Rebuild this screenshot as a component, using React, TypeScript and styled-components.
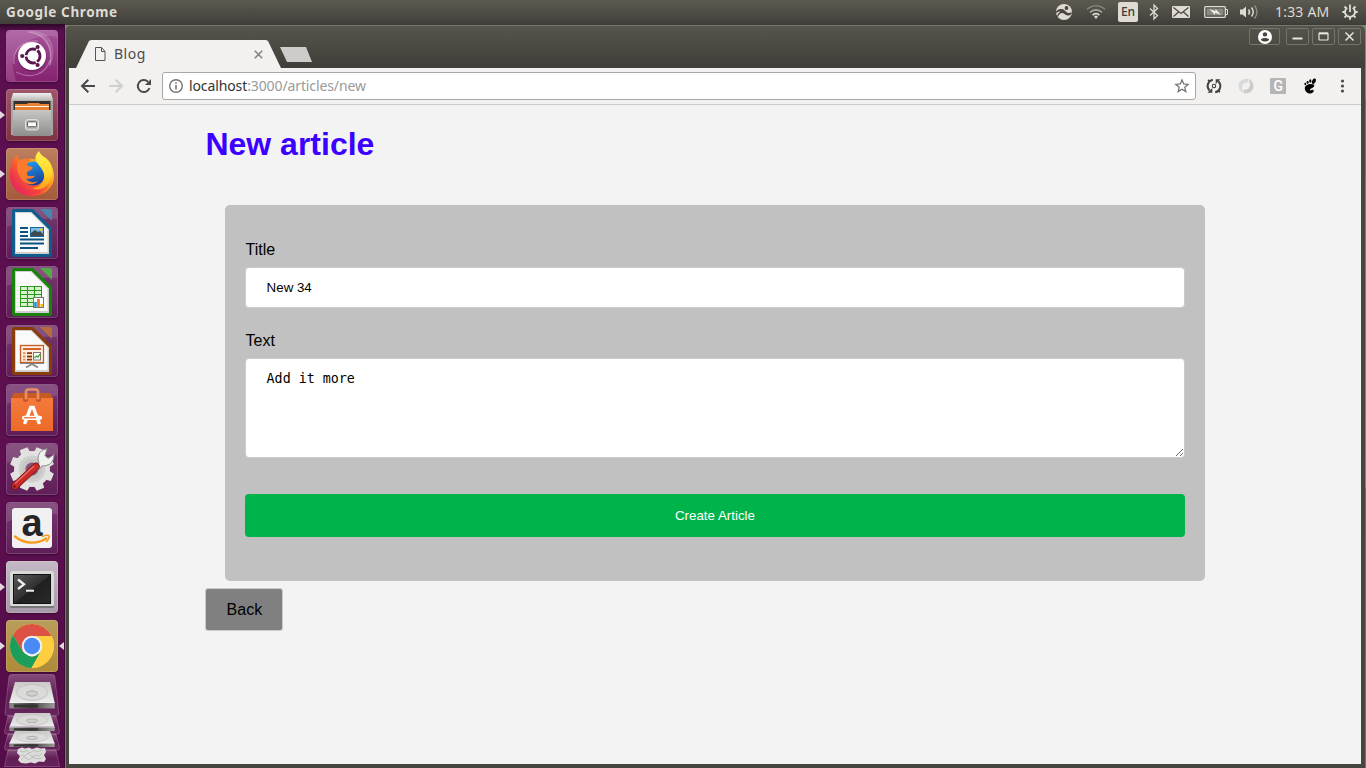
import React from "react";
import styled, { createGlobalStyle, css } from "styled-components";

const GlobalStyle = createGlobalStyle`
  * { box-sizing: border-box; }
  body { margin: 0; overflow: hidden; background: #3c3b37; }
  svg { display: block; flex: none; overflow: visible; }
`;

const uiFont = `"Noto Sans", "Open Sans", sans-serif`;

const Desktop = styled.div`
  width: 1366px;
  height: 768px;
  display: flex;
  flex-direction: column;
  font-family: ${uiFont};
  overflow: hidden;
  background: linear-gradient(#3c3b37 0 25px, #76935c 25px 98px, #6f7a5c 98px, #85837c 488px, #a4553c 488px, #b25c41);
`;

/* ---------- system panel ---------- */

const Panel = styled.header`
  height: 24px;
  flex: none;
  display: flex;
  align-items: center;
  padding: 0 8px 0 6px;
  color: #dfdbd2;
  background: linear-gradient(#5c5a50, #403f3a);
`;

const PanelTitle = styled.div`
  font-size: 13.5px;
  font-weight: 700;
  line-height: 24px;
  letter-spacing: 0.62px;
  margin-right: auto;
  white-space: nowrap;
`;

const Indicator = styled.div<{ $gap: number }>`
  margin-left: ${(p) => p.$gap}px;
  flex: none;
`;

const LanguageBadge = styled.div`
  width: 20px;
  height: 20px;
  border-radius: 2px;
  background: #dfdbd2;
  color: #3c3b37;
  font-size: 12px;
  font-weight: 500;
  line-height: 20px;
  text-align: center;
`;

const Clock = styled.div`
  width: 54px;
  font-size: 14px;
  line-height: 24px;
  letter-spacing: 0.2px;
  white-space: nowrap;
`;

/* ---------- launcher ---------- */

const Workspace = styled.div`
  flex: 1;
  min-height: 0;
  display: flex;
  padding-right: 1px;
`;

const Launcher = styled.nav`
  width: 65px;
  flex: none;
  display: flex;
  flex-direction: column;
  gap: 7px;
  padding: 6px 0 0;
  background: linear-gradient(#2d0628 0, #5b0f4f 7px, #5d0f50 60%, #540d48);
  border-right: 1px solid #3f0a38;
  overflow: hidden;
`;

const Slot = styled.div`
  height: 52px;
  flex: none;
  display: grid;
  grid-template-columns: 6px 52px 6px;
`;

const Tile = styled.div<{ $bg: string }>`
  width: 52px;
  height: 52px;
  border-radius: 4px;
  background: ${(p) => p.$bg};
  box-shadow: inset 0 0 0 1px rgba(255, 255, 255, 0.16), 0 1px 2px rgba(0, 0, 0, 0.35);
`;

const Pip = styled.div<{ $side: "left" | "right"; $on?: boolean }>`
  align-self: center;
  width: 5px;
  height: 8px;
  visibility: ${(p) => (p.$on ? "visible" : "hidden")};
  background: #e0d8de;
  ${(p) =>
    p.$side === "left"
      ? css`clip-path: polygon(0 0, 100% 50%, 0 100%);`
      : css`clip-path: polygon(100% 0, 0 50%, 100% 100%); margin-left: 1px;`}
`;

const DiskStack = styled.div`
  flex: none;
  margin-top: -5px;
`;

/* ---------- browser window ---------- */

const BrowserWindow = styled.main`
  flex: 1;
  min-width: 0;
  display: flex;
  flex-direction: column;
  padding: 0 4px 4px 3px;
  margin-top: 1px;
  border-left: 1px solid #77756c;
  border-top: 1px solid #77756c;
  border-top-left-radius: 5px;
  border-top-right-radius: 5px;
  background: linear-gradient(#56544b 0, #3f3e39 42px, #464540 43px);
`;

const TitleBar = styled.div`
  height: 42px;
  flex: none;
  display: flex;
  align-items: flex-start;
`;

const Tab = styled.div`
  width: 205px;
  height: 28px;
  margin: 14px 0 0 7px;
  padding: 0 18px 0 18px;
  display: flex;
  align-items: center;
  background: #f2f1f0;
  clip-path: polygon(0 100%, 13px 1px, 15px 0, 190px 0, 192px 1px, 100% 100%);
`;

const TabLabel = styled.span`
  margin-left: 8px;
  margin-right: auto;
  font-size: 14px;
  line-height: 28px;
  color: #4c4c4c;
  letter-spacing: 0.5px;
`;

const NewTab = styled.div`
  width: 32px;
  height: 15px;
  margin: 21px auto 0 -1px;
  background: #cdccca;
  clip-path: polygon(0 0, 26px 0, 100% 100%, 7px 100%);
`;

const WindowButton = styled.div<{ $w: number; $gap: number }>`
  width: ${(p) => p.$w}px;
  height: 17px;
  margin: 2px 0 0 ${(p) => p.$gap}px;
  display: flex;
  align-items: center;
  justify-content: center;
  border: 1px solid #76746b;
  border-radius: 2px;
`;

const Toolbar = styled.div`
  height: 37px;
  flex: none;
  display: flex;
  align-items: center;
  padding: 0 11px;
  background: #f2f1f0;
  border-bottom: 1px solid #cfcdcb;
`;

const NavButtons = styled.div`
  display: flex;
  gap: 12px;
  width: 82px;
`;

const AddressBar = styled.div`
  flex: 1;
  height: 28px;
  display: flex;
  align-items: center;
  padding: 0 5px;
  background: #fff;
  border: 1px solid #a9a8a6;
  border-radius: 3px;
`;

const Address = styled.div`
  margin-left: 5px;
  margin-right: auto;
  font-size: 14px;
  line-height: 24px;
  letter-spacing: -0.11px;
  color: #9a9a9a;
  white-space: nowrap;
`;

const Host = styled.span`
  color: #333;
`;

const Extensions = styled.div`
  display: flex;
  gap: 16px;
  margin-left: 10px;
`;

/* ---------- web page ---------- */

const Page = styled.div`
  flex: 1;
  background: #f3f3f3;
  padding: 21px 136px 0;
  font-family: "Liberation Sans", Arial, sans-serif;
  color: #000;
`;

const Heading = styled.h1`
  margin: 0 0 42px;
  padding-left: 0.4px;
  font-size: 32px;
  line-height: 37px;
  font-weight: 700;
  color: #3b00ff;
`;

const Form = styled.form`
  height: 376px;
  margin: 0 20px;
  padding: 36px 20px 0;
  display: flex;
  flex-direction: column;
  background: #c1c1c1;
  border-radius: 5px;
`;

const Label = styled.label`
  padding-left: 0.6px;
  font-size: 16px;
  line-height: 18px;
`;

const fieldStyle = css`
  display: block;
  width: 100%;
  border: 1px solid #ccc;
  border-radius: 4px;
  background: #fff;
  color: #000;
  outline: none;
`;

const TextInput = styled.input`
  ${fieldStyle}
  height: 41px;
  margin: 8px 0 24px;
  padding: 12px 20.6px;
  font: 13.333px "Liberation Sans", Arial, sans-serif;
`;

const TextArea = styled.textarea`
  ${fieldStyle}
  height: 100px;
  margin: 8px 0 36px;
  padding: 12px 20.6px;
  font: 13.333px "DejaVu Sans Mono", monospace;
  resize: vertical;
`;

const Submit = styled.button`
  height: 43px;
  border: 0;
  border-radius: 4px;
  background: #00b44b;
  color: #fff;
  font: 13.333px "Liberation Sans", Arial, sans-serif;
`;

const BackLink = styled.a`
  display: inline-block;
  width: 78px;
  height: 43px;
  margin-top: 7px;
  padding-left: 20.6px;
  border: 1px solid #ccc;
  border-radius: 3px;
  background: #808080;
  color: #000;
  font-size: 16px;
  line-height: 41px;
`;

/* ---------- launcher artwork ---------- */

const Art = ({ children }: { children: React.ReactNode }) => (
  <svg width="52" height="52" viewBox="0 0 52 52">{children}</svg>
);

const UbuntuArt = () => (
  <Art>
    <path d="M1 5a4 4 0 0 1 4-4h42a4 4 0 0 1 4 4v2C32 3 12 12 7 30c-1 6 0 11 3 21H5a4 4 0 0 1-4-4z" fill="#fff" opacity=".13" />
    <path d="M20 1c19 3 27 17 23 37 7-12 6-26-3-33-6-4-13-5-20-4z" fill="#fff" opacity=".16" />
    <g fill="none" stroke="#f0cdea" strokeOpacity=".38" strokeWidth="1.200">
      <path d="M8 34C6 20 17 10 32 11" />
      <path d="M22 2c17 2 26 14 22 33" />
      <path d="M44 30C40 44 26 50 10 42" />
    </g>
    <circle cx="26" cy="27" r="14.500" fill="#30102b" opacity=".35" />
    <circle cx="26" cy="26" r="14" fill="#fff" />
    <circle cx="27" cy="26" r="7" fill="none" stroke="#5c1850" strokeWidth="2.800" strokeDasharray="13.200 1.460" strokeDashoffset="6.600" />
    <circle cx="16.200" cy="26" r="2.100" fill="#5c1850" />
    <circle cx="31.600" cy="17" r="2.100" fill="#5c1850" />
    <circle cx="31.600" cy="35" r="2.100" fill="#5c1850" />
  </Art>
);

const FilesArt = () => (
  <Art>
    <defs>
      <linearGradient id="cab" x2="0" y2="1"><stop stopColor="#c6c6c4" /><stop offset="1" stopColor="#8e8e8c" /></linearGradient>
      <linearGradient id="cabTop" x2="0" y2="1"><stop stopColor="#f0f0f0" /><stop offset="1" stopColor="#b9b9b7" /></linearGradient>
    </defs>
    <path d="M5 9h42v37H5z" fill="#a7a6a4" />
    <path d="M7 4h38l2 7.500H5z" fill="url(#cabTop)" />
    <path d="M7.500 12h37v10h-37z" fill="#33302d" />
    <path d="M9 15h12l1-1h11l1 1h9v7H9z" fill="#e98135" />
    <path d="M9 17.500h34" stroke="#fff1df" strokeWidth="1.200" />
    <path d="M7 21h38v26H7z" fill="url(#cab)" />
    <rect x="19.500" y="30.500" width="13" height="10.500" rx="2" fill="#bcbcba" stroke="#dedede" />
    <rect x="21.500" y="32.800" width="9" height="5" rx="1" fill="#fafafa" stroke="#555" />
  </Art>
);

const FirefoxArt = () => (
  <Art>
    <defs>
      <linearGradient id="ff" x1="1" y1="0" x2=".1" y2=".75">
        <stop stopColor="#fff04a" /><stop offset=".4" stopColor="#ffa51f" /><stop offset=".72" stopColor="#f95333" /><stop offset="1" stopColor="#e72a5c" />
      </linearGradient>
      <linearGradient id="ffBlue" x1=".2" y1="0" x2=".5" y2="1"><stop stopColor="#1d9cf2" /><stop offset="1" stopColor="#1b3f94" /></linearGradient>
      <linearGradient id="ffTail" x2="0" y2="1"><stop stopColor="#fff14e" /><stop offset=".6" stopColor="#ffd52a" /><stop offset="1" stopColor="#ff9d1e" /></linearGradient>
    </defs>
    <path d="M6 15C6 12 8 9 11 7.500c0 2 1.500 3.500 4 4.500 3-1 6-1.500 10-1.200L42 13c8 9 8 22 0 29-8 8-23 8-31 1C3 36 2 24 6 15z" fill="url(#ff)" />
    <circle cx="27.500" cy="25.500" r="12" fill="url(#ffBlue)" />
    <path d="M12 13c4-2 8-2.500 13-1.500-3 2-4 4-4 6l5.500 1.500c1 2-2 3-5.500 5 0 3 0 3.500 2 4 2 .5 3.500-.5 6-.3-1.500 2.800-5 3.500-9 2.800 3 4 8 4.500 12 2.500-3 4-10 4.500-15 0-6-6-7-15-5-20z" fill="#fb7a2b" />
    <path d="M33 3c-4 4-5 9-1 13 5 6 8 11 5 17-2 5-6 7-11 7 6 3 13 1 17-6 5-8 4-17-1-22-4-4-7-4-9-9z" fill="url(#ffTail)" />
    <path d="M5 19c0 14 8 21 18 23 8 1 15 0 21-6-8 13-26 13-35 2-4-5-5-12-4-19z" fill="#ed2e4c" opacity=".45" />
  </Art>
);

const OfficeDoc = ({ color, light, children }: { color: string; light: string; children: React.ReactNode }) => (
  <Art>
    <path d="M1 5a4 4 0 0 1 4-4h42a4 4 0 0 1 4 4v7Q22 10 1 20z" fill="#fff" opacity=".13" />
    <path d="M8 2h19l19 19v27a2 2 0 0 1-2 2H8a2 2 0 0 1-2-2V4a2 2 0 0 1 2-2z" fill={color} />
    <path d="M9 5h16.500L43 22.500V47H9z" fill="#cfcfcf" />
    <path d="M10 6h15L41.500 22.500V45H10z" fill="#fafafa" />
    <path d="M34 2h10a2 2 0 0 1 2 2v10z" fill={light} opacity=".85" />
    {children}
  </Art>
);

const WriterArt = () => (
  <OfficeDoc color="#0e5d8c" light="#3d8fb9">
    <path d="M14 21h8M14 25h8M14 29h8M14 32.500h24M14 36.500h24M14 41h18" stroke="#08537f" strokeWidth="1.800" />
    <rect x="24.500" y="20.500" width="13" height="9" fill="#79bce4" stroke="#14679a" />
    <path d="M25 29v-3l4-3 3 2 2-1 3 3v2z" fill="#3d4a51" /><circle cx="35" cy="22.500" r="1.500" fill="#f0c53b" />
  </OfficeDoc>
);

const CalcArt = () => (
  <OfficeDoc color="#19820d" light="#4bba3c">
    <rect x="14.500" y="20.500" width="21" height="20" fill="#d5f3cd" stroke="#2b971c" />
    <path d="M14 24.500h22M14 28.500h22M14 32.500h22M14 36.500h22M21.500 20v21M28.500 20v21" stroke="#2b971c" strokeWidth="1.100" />
    <rect x="27.500" y="31.500" width="10" height="10" fill="#fff" stroke="#777" />
    <path d="M29.500 36v5" stroke="#2197d9" strokeWidth="2.600" /><path d="M32.500 33v8" stroke="#e56c22" strokeWidth="2.600" /><path d="M35.700 38v3" stroke="#f2c311" strokeWidth="2.600" />
  </OfficeDoc>
);

const ImpressArt = () => (
  <OfficeDoc color="#8a3c0b" light="#c27234">
    <rect x="14.500" y="20.500" width="23" height="17" fill="#ffeedd" stroke="#c75e25" strokeWidth="1.300" />
    <path d="M17 24h18" stroke="#d4652a" strokeWidth="2" />
    <path d="M17 28.200h2.500M17 31.500h2.500M17 34.700h2.500" stroke="#e48c57" strokeWidth="1.800" />
    <path d="M21 28.200h5M21 31.500h5M21 34.700h5" stroke="#8d3408" strokeWidth="1.800" />
    <rect x="27.500" y="27.500" width="7" height="7.500" fill="#fff" stroke="#777" />
    <path d="m28.500 33 2-2 1.500 1 2-3" stroke="#31a02b" fill="none" strokeWidth="1.300" />
    <path d="M14 38.500h24" stroke="#888" /><path d="m20 42.500 6-3.500 6 3.500" stroke="#888" strokeWidth="1.800" fill="none" />
  </OfficeDoc>
);

const SoftwareArt = () => (
  <Art>
    <defs><linearGradient id="bag" x2="0" y2="1"><stop stopColor="#f47a3c" /><stop offset="1" stopColor="#ed6a27" /></linearGradient></defs>
    <path d="M1 5a4 4 0 0 1 4-4h42a4 4 0 0 1 4 4v7Q22 10 1 20z" fill="#fff" opacity=".13" />
    <path d="M8 9h36l3 5H5z" fill="#c95a22" />
    <path d="M5 14h42v33H5z" fill="url(#bag)" />
    <circle cx="19.500" cy="15.500" r="2.500" fill="#c55420" /><circle cx="32.500" cy="15.500" r="2.500" fill="#c55420" />
    <path d="M20 15.500V8q0-2.500 2.500-2.500h7q2.500 0 2.500 2.500v7.500" fill="none" stroke="#ea8e69" strokeWidth="2.700" />
    <path d="M18.500 40 24.800 23.500h2.400L33.500 40" fill="none" stroke="#fff" strokeWidth="3.400" />
    <path d="M18 33.800h16" stroke="#fff" strokeWidth="4.200" strokeLinecap="round" /><path d="M18 33.800h12" stroke="#ee6f30" strokeWidth="1.300" />
  </Art>
);

const SettingsArt = () => (
  <Art>
    <path d="M1 5a4 4 0 0 1 4-4h42a4 4 0 0 1 4 4v7Q22 10 1 20z" fill="#fff" opacity=".13" />
    <g fill="#e2e2e0">
      {[22.5, 67.5, 112.5, 157.5, 202.5, 247.5, 292.5, 337.5].map((a) => (
        <path key={a} d="M21 11 22 4h8l1 7z" transform={`rotate(${a} 26 26)`} />
      ))}
      <circle cx="26" cy="26" r="18" />
    </g>
    <circle cx="26" cy="26" r="12" fill="#c6c6c4" stroke="#cfcfcd" strokeWidth="3" />
    <circle cx="26" cy="26" r="6.500" fill="#875178" />
    <path d="M29 25.500 33 20c-2-5-1-10 4-13l4-1.500-2 7 3 3 6-4c0 5-2 9-6 10.500-3 1-4 .5-6 1l-4.500 5z" fill="#f0f0ef" stroke="#8b8b8b" />
    <path d="M9 43 30 23.500" stroke="#811515" strokeWidth="7.400" strokeLinecap="round" />
    <path d="M9 43 30 23.500" stroke="#c92b2b" strokeWidth="5.800" strokeLinecap="round" />
    <path d="m9 40.500 19-17.500" stroke="#e8706a" strokeWidth="1.400" />
    <circle cx="8.500" cy="43.500" r="1.200" fill="#6c1111" />
  </Art>
);

const AmazonArt = () => (
  <Art>
    <path d="M1 5a4 4 0 0 1 4-4h42a4 4 0 0 1 4 4v7Q22 10 1 20z" fill="#fff" opacity=".13" />
    <rect x="6" y="6" width="40" height="40" rx="3" fill="#f1f1f1" />
    <text x="26" y="33.500" textAnchor="middle" fontFamily="Liberation Sans, sans-serif" fontWeight="700" fontSize="38" fill="#252525">a</text>
    <path d="M9 34.500c9 7.500 22 8 31 2" fill="none" stroke="#f79b18" strokeWidth="2.300" strokeLinecap="round" />
    <path d="M36.500 34.500c3-1.500 6-1.500 6.500-.5s-1 4-2.500 5.500" fill="none" stroke="#f79b18" strokeWidth="1.600" strokeLinecap="round" />
  </Art>
);

const TerminalArt = () => (
  <Art>
    <defs><linearGradient id="term" x2="1" y2="1"><stop stopColor="#5a5a5a" /><stop offset=".5" stopColor="#303030" /><stop offset=".51" stopColor="#202020" /><stop offset="1" stopColor="#292929" /></linearGradient></defs>
    <rect x="4" y="10" width="44" height="37" rx="1.500" fill="#777" />
    <rect x="4" y="10" width="44" height="35" rx="1.500" fill="#d9d9d7" />
    <rect x="7" y="13" width="38" height="30" fill="#111" />
    <rect x="8" y="14" width="36" height="28" fill="url(#term)" />
    <path d="m12 18.500 6 4.800-6 4.700" fill="none" stroke="#eee" strokeWidth="2.300" /><path d="M20 29.700h8" stroke="#eee" strokeWidth="2" />
  </Art>
);

const ChromeArt = () => (
  <Art>
    <circle cx="26" cy="26" r="22" fill="#ffcd40" />
    <path d="M26 26 16.500 31.500 6.950 15A22 22 0 0 1 45.600 16H26z" fill="#dc5245" />
    <path d="M6.950 15A22 22 0 0 0 25.500 48L35 31.500 26 37l-9.500-5.500z" fill="#1b9d5b" />
    <path d="M26 16h19.600A22 22 0 0 1 25.500 48L35 31z" fill="#ffcd40" />
    <circle cx="26" cy="26" r="10.300" fill="#f2f2f2" />
    <circle cx="26" cy="26" r="8.200" fill="#4a8af4" />
  </Art>
);

const Disk = ({ y, h }: { y: number; h: number }) => (
  <g transform={`translate(0 ${y}) scale(1 ${h})`}>
    <path d="M15 0h35l4.500 20h-45z" fill="url(#diskTop)" />
    <ellipse cx="32" cy="10.500" rx="15.500" ry="8" fill="#dadad8" stroke="#c4c4c2" />
    <ellipse cx="32" cy="11.500" rx="5.500" ry="2.600" fill="#cfcfcd" stroke="#a9a9a7" />
    <path d="M9.300 20.500h45.400v6H9.300z" fill="url(#diskEdge)" /><path d="M9.300 20.500h45.400" stroke="#f3f3f3" />
    <path d="M14 24h24" stroke="#333" strokeWidth="3" />
  </g>
);

const DisksArt = () => (
  <svg width="64" height="96" viewBox="0 0 64 96">
    <defs>
      <linearGradient id="diskTop" x2="0" y2="1"><stop stopColor="#c9c9c7" /><stop offset="1" stopColor="#ececec" /></linearGradient>
      <linearGradient id="diskEdge"><stop stopColor="#8a8a88" /><stop offset=".5" stopColor="#444" /><stop offset="1" stopColor="#9c9c9a" /></linearGradient>
      <linearGradient id="plate" x2="0" y2="1"><stop stopColor="#fff" stopOpacity=".26" /><stop offset=".5" stopColor="#fff" stopOpacity=".07" /><stop offset="1" stopColor="#fff" stopOpacity=".1" /></linearGradient>
    </defs>
    <g fill="url(#plate)" stroke="#e5c4df" strokeOpacity=".25">
      <path d="M11.500.500h41q2 0 2.300 2l4 36.500q0 2.500-2 2.500H7q-2 0-2-2.500l4-36.500q.500-2 2.500-2z" />
      <path d="m8 42-3.500 16q0 2 2 2h51q2 0 2-2L56 42z" />
      <path d="m8 60-3.500 14q0 2 2 2h51q2 0 2-2L56 60z" />
      <path d="m8 76-3.500 16.500h55L56 76z" />
    </g>
    <Disk y={8} h={1} />
    <Disk y={39} h={0.68} />
    <Disk y={57} h={0.6} />
    <path d="m18 75 4-1.500 3 1 4-1 3 1.500 5-1.500 4 1 4-.5 1 4-2 3 2 4-2 3-5-.5-4 2-4-1-5 1-5-.5-3-3 2-4-3-3z" fill="#dcdcda" />
    <path d="m20 77 4 1 2-2 4 3 4-3 3 2 5-2M21 81l4 1 3-3 4 4 3-2 4 1 3-2M21 86l3-3 5 3 4-3 4 2 5-1" fill="none" stroke="#b0b0ae" strokeWidth=".7" />
  </svg>
);

const glass = (a: string, b: string) => `linear-gradient(${a}, ${b})`;
const plain = glass("#77396f", "#5f1e58");

const apps: { bg: string; art: React.ReactNode; running?: boolean; focused?: boolean }[] = [
  { bg: glass("#a5549a", "#85206f"), art: <UbuntuArt /> },
  { bg: glass("#a0566b", "#7d3340"), art: <FilesArt />, running: true },
  { bg: glass("#bd805f", "#a55a3a"), art: <FirefoxArt />, running: true },
  { bg: plain, art: <WriterArt /> },
  { bg: plain, art: <CalcArt /> },
  { bg: plain, art: <ImpressArt /> },
  { bg: plain, art: <SoftwareArt /> },
  { bg: plain, art: <SettingsArt /> },
  { bg: plain, art: <AmazonArt /> },
  { bg: glass("#c4b9c5", "#a69aa8"), art: <TerminalArt />, running: true },
  { bg: glass("#b99d5b", "#ae8b38"), art: <ChromeArt />, running: true, focused: true },
];

/* ---------- panel indicators ---------- */

const fg = "#dfdbd2";

const ActivityIcon = () => (
  <svg width="16" height="16" viewBox="0 0 16 16">
    <circle cx="8" cy="8" r="8" fill={fg} />
    <path d="M0 7.500C2 5.500 3.500 5 5.500 5 8 5 9 7 11 8.500c1.500 1 3.500.5 5-.5-.5 2.500-2 4-4.500 3.500C9 11 8 9 6 9c-1.500 0-3 1.500-4.200 4l-.8-1C2 9.500 3.500 8 4.500 7.500 3 7.200 1.500 8 0 9z" fill="#48463f" />
    <circle cx="10.500" cy="4" r="1.900" fill="#48463f" />
  </svg>
);
const WifiIcon = () => (
  <svg width="20" height="16" viewBox="0 0 20 16" fill="none" strokeWidth="1.700">
    <path d="M1 5.500C6 .5 14 .5 19 5.500" stroke="#85827a" /><path d="M4 8.500c3.500-3.500 8.500-3.500 12 0" stroke="#aaa79f" />
    <path d="M6.600 11.200c2-2 4.800-2 6.800 0" stroke={fg} /><path d="m8 12.500 2-1 2 1-2 2.500z" fill={fg} />
  </svg>
);
const BluetoothIcon = () => (
  <svg width="10" height="16" viewBox="0 0 10 16" fill="none" stroke={fg} strokeWidth="1.300"><path d="m1 4.500 7.500 7L5 15V1l3.500 3.500L1 11.500" /></svg>
);
const MailIcon = () => (
  <svg width="18" height="12" viewBox="0 0 18 12"><rect width="18" height="12" rx="1" fill={fg} /><path d="m1.500 1.500 7.500 6 7.500-6M1.500 10.500l5-4.500M16.500 10.500l-5-4.500" fill="none" stroke="#48463f" strokeWidth="1.200" /></svg>
);
const BatteryIcon = () => (
  <svg width="24" height="12" viewBox="0 0 24 12">
    <rect x=".700" y=".700" width="20.600" height="10.600" rx="1" fill="none" stroke={fg} strokeWidth="1.300" /><path d="M21.500 3.500h2v5h-2" fill="none" stroke={fg} />
    <rect x="2.500" y="2.500" width="17" height="7" fill="#8b8880" /><path d="m5.500 3 6 2.200V3l5.500 6-6-2.200V9z" fill="#f3f0e8" />
  </svg>
);
const VolumeIcon = () => (
  <svg width="21" height="16" viewBox="0 0 21 16" fill="none" strokeWidth="1.500">
    <path d="M1 5.500h2.500L7 2.500v11l-3.500-3H1z" fill={fg} /><path d="M9.500 5.500q2 2.500 0 5M12.500 3.500q3.500 4.500 0 9" stroke={fg} /><path d="M15.500 1.500q5 6.500 0 13" stroke="#8d8a82" />
  </svg>
);
const SessionIcon = () => (
  <svg width="16" height="16" viewBox="0 0 16 16" fill="none" stroke={fg}>
    <path d="M5.200 3.800a5 5 0 1 0 5.600 0" strokeWidth="1.900" /><path d="M8 .5V8" strokeWidth="1.800" />
    <path d="M.3 8h2.500M13.200 8h2.500M2.500 13.500l1.700-1.700M13.500 13.500l-1.700-1.700M8 15.700v-2.500M2.500 2.500l1.700 1.700M13.500 2.500l-1.700 1.700" strokeWidth="1.900" />
  </svg>
);

/* ---------- browser icons ---------- */

const PageIcon = () => (
  <svg width="12" height="16" viewBox="0 0 12 16" fill="none" stroke="#555"><path d="M1.500 1.500h6l3.500 4v9H1.500zM7.500 1.500v4H11" /></svg>
);
const CloseTabIcon = () => (
  <svg width="9" height="9" viewBox="0 0 9 9" stroke="#808080" strokeWidth="1.500"><path d="m.800.800 7.400 7.400M8.200.800.800 8.200" /></svg>
);
const ProfileIcon = () => (
  <svg width="14" height="14" viewBox="0 0 14 14"><circle cx="7" cy="7" r="7" fill="#fff" /><circle cx="7" cy="4.400" r="2.200" fill="#48463f" /><path d="M2.800 9.500C4 7.500 10 7.500 11.200 9.500 10 12.300 4 12.300 2.800 9.500z" fill="#48463f" /></svg>
);
const ArrowIcon = ({ color, flip }: { color: string; flip?: boolean }) => (
  <svg width="16" height="16" viewBox="0 0 16 16" fill="none" stroke={color} strokeWidth="2"><path d="M15 8H2.500M8.300 1.700 2 8l6.300 6.300" transform={flip ? "matrix(-1 0 0 1 16 0)" : undefined} /></svg>
);
const ReloadIcon = () => (
  <svg width="16" height="16" viewBox="0 0 16 16"><path d="M13.500 10A6 6 0 1 1 12 3.700" fill="none" stroke="#4a4a4a" strokeWidth="2" /><path d="M15 1v6H9z" fill="#4a4a4a" /></svg>
);
const InfoIcon = () => (
  <svg width="16" height="16" viewBox="0 0 16 16" fill="none" stroke="#737373" strokeWidth="1.400"><circle cx="8" cy="8" r="6.300" /><path d="M8 7v4.500M8 4.300v1.500" strokeWidth="1.600" /></svg>
);
const StarIcon = () => (
  <svg width="16" height="16" viewBox="0 0 16 16" fill="none" stroke="#737373" strokeWidth="1.300"><path d="m8 2 1.700 4 4.400.4-3.300 2.900 1 4.300L8 11.300l-3.800 2.300 1-4.300-3.300-2.900 4.400-.4z" /></svg>
);
const SyncIcon = () => (
  <svg width="16" height="16" viewBox="0 0 16 16" fill="none" stroke="#3f3f3f">
    <path d="M6.800 1.700A6.400 6.400 0 0 0 3.500 12.500M9.200 14.300A6.400 6.400 0 0 0 12.500 3.500" strokeWidth="1.900" />
    <path d="M1.500 14.700H6.300V10zM14.500 1.300H9.700V6z" fill="#3f3f3f" stroke="none" />
    <circle cx="8" cy="8" r="1.700" strokeWidth="1.100" />
    <path d="m2 1.800 1.800 1.500M14 14.200l-1.800-1.500" strokeWidth="1.500" />
  </svg>
);
const SwirlIcon = () => (
  <svg width="16" height="16" viewBox="0 0 16 16">
    <path d="M10 .8C4 0 0 4 .6 8.800 1 12.500 3.500 14.500 6 15 4 12.500 3.600 9 5 6.500 6.200 4.500 8.500 4 10.500 4.700z" fill="#dadada" />
    <path d="M6 15.200c6 .8 10-3.200 9.400-8C15 3.500 12.500 1.500 10.500 1c1.500 2.500 2 6 .6 8.500-1.200 2-3.300 2.600-5.600 1.800z" fill="#cbcbcb" />
  </svg>
);
const GIcon = () => (
  <svg width="16" height="16" viewBox="0 0 16 16"><rect width="16" height="16" rx="1" fill="#b5b5b5" /><text x="8.300" y="13" textAnchor="middle" fontFamily="Roboto, sans-serif" fontWeight="500" fontSize="14" fill="#fff">G</text></svg>
);
const FootIcon = () => (
  <svg width="16" height="16" viewBox="0 0 16 16" fill="#050505">
    <ellipse cx="11.900" cy="3.200" rx="1.800" ry="2.900" transform="rotate(22 11.900 3.200)" /><ellipse cx="8.300" cy="3" rx="1.100" ry="1.800" /><ellipse cx="5.600" cy="4.300" rx="1" ry="1.500" /><ellipse cx="3.300" cy="6" rx=".9" ry="1.300" />
    <path d="M12.200 6.800C8 5 2.800 7 2.800 10.400c0 2.600 2.700 5.100 5.400 5.100 2.200 0 3.800-1.400 3.500-3-.2-1-1.400-1.100-2.100-.5-.7.700-1.700.4-1.700-.3.200-1.500 5-1.600 4.300-4.900z" />
  </svg>
);
const MenuIcon = () => (
  <svg width="16" height="16" viewBox="0 0 16 16" fill="#4a4a4a"><circle cx="8.500" cy="3" r="1.600" /><circle cx="8.500" cy="8" r="1.600" /><circle cx="8.500" cy="13" r="1.600" /></svg>
);

const indicators: [number, React.ReactNode][] = [
  [0, <ActivityIcon />],
  [14, <WifiIcon />],
  [12, <LanguageBadge>En</LanguageBadge>],
  [11, <BluetoothIcon />],
  [13, <MailIcon />],
  [14, <BatteryIcon />],
  [11, <VolumeIcon />],
  [15, <Clock>1:33 AM</Clock>],
  [13, <SessionIcon />],
];

export default function App() {
  return (
    <Desktop>
      <GlobalStyle />
      <Panel>
        <PanelTitle>Google Chrome</PanelTitle>
        {indicators.map(([gap, icon], i) => (
          <Indicator key={i} $gap={gap}>{icon}</Indicator>
        ))}
      </Panel>
      <Workspace>
        <Launcher>
          {apps.map((app, i) => (
            <Slot key={i}>
              <Pip $side="left" $on={app.running} />
              <Tile $bg={app.bg}>{app.art}</Tile>
              <Pip $side="right" $on={app.focused} />
            </Slot>
          ))}
          <DiskStack><DisksArt /></DiskStack>
        </Launcher>
        <BrowserWindow>
          <TitleBar>
            <Tab>
              <PageIcon />
              <TabLabel>Blog</TabLabel>
              <CloseTabIcon />
            </Tab>
            <NewTab />
            <WindowButton $w={31} $gap={0}><ProfileIcon /></WindowButton>
            <WindowButton $w={23} $gap={6}>
              <svg width="11" height="11" viewBox="0 0 11 11"><path d="M.5 7.500h10" stroke="#e8e5de" strokeWidth="2" /></svg>
            </WindowButton>
            <WindowButton $w={23} $gap={3}>
              <svg width="11" height="11" viewBox="0 0 11 11" fill="none" stroke="#e8e5de"><rect x="1" y="2" width="9" height="7" rx=".5" strokeWidth="1.200" /><path d="M1 2.500h9" strokeWidth="1.800" /></svg>
            </WindowButton>
            <WindowButton $w={23} $gap={3}>
              <svg width="11" height="11" viewBox="0 0 11 11" stroke="#e8e5de" strokeWidth="1.500"><path d="m1.500 1.500 8 8M9.500 1.500l-8 8" /></svg>
            </WindowButton>
          </TitleBar>
          <Toolbar>
            <NavButtons>
              <ArrowIcon color="#4a4a4a" />
              <ArrowIcon color="#cfcfce" flip />
              <ReloadIcon />
            </NavButtons>
            <AddressBar>
              <InfoIcon />
              <Address><Host>localhost</Host>:3000/articles/new</Address>
              <StarIcon />
            </AddressBar>
            <Extensions>
              <SyncIcon />
              <SwirlIcon />
              <GIcon />
              <FootIcon />
              <MenuIcon />
            </Extensions>
          </Toolbar>
          <Page>
            <Heading>New article</Heading>
            <Form>
              <Label htmlFor="title">Title</Label>
              <TextInput id="title" defaultValue="New 34" />
              <Label htmlFor="text">Text</Label>
              <TextArea id="text" defaultValue="Add it more" spellCheck={false} />
              <Submit type="button">Create Article</Submit>
            </Form>
            <BackLink>Back</BackLink>
          </Page>
        </BrowserWindow>
      </Workspace>
    </Desktop>
  );
}
